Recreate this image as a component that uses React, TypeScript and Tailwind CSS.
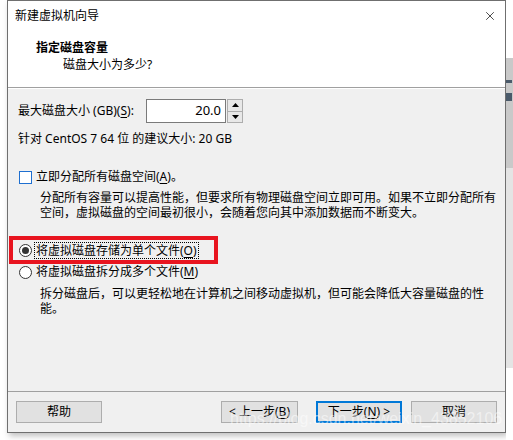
import { X } from 'lucide-react';

const font = { fontFamily: '"Noto Sans", "Noto Sans CJK SC", sans-serif' };

function Key({ k }: { k: string }) {
  return <span className="underline underline-offset-2">{k}</span>;
}

function Button({ children, focused }: { children: React.ReactNode; focused?: boolean }) {
  return (
    <div
      className={
        'w-[86px] h-[22px] flex items-center justify-center text-[12px] text-black bg-[#e1e1e1] ' +
        (focused ? 'border-2 border-[#0078d7]' : 'border border-[#adadad]')
      }
    >
      {children}
    </div>
  );
}

export default function App() {
  return (
    <div className="w-[513px] h-[440px] bg-white flex overflow-hidden relative" style={font}>
      <div className="w-[7px] shrink-0" />

      {/* dialog */}
      <div className="w-[499px] h-[433px] shrink-0 border border-[#6f6f6f] flex flex-col bg-[#f0f0f0] shadow-[2px_3px_6px_rgba(0,0,0,0.25)]">
        {/* header */}
        <div className="h-[87px] bg-white border-b border-[#a0a0a0] flex flex-col">
          <div className="h-[30px] flex items-center justify-between pl-[7px] pr-[8px]">
            <span className="text-[12px] text-black leading-none">新建虚拟机向导</span>
            <X className="w-[14px] h-[14px] text-black" strokeWidth={1.2} />
          </div>
          <div className="pl-[28px] pt-[10px] text-[12px] font-bold text-black leading-[14px]">指定磁盘容量</div>
          <div className="pl-[55px] pt-[3px] text-[12px] text-black leading-[14px]">磁盘大小为多少?</div>
        </div>
        <div className="h-px bg-white" />

        {/* body */}
        <div className="flex-1 flex flex-col pl-[10px] pr-[10px] text-[12px] text-black">
          <div className="flex items-center mt-[10px] h-[24px]">
            <span className="w-[128px]">
              最大磁盘大小 (GB)(<Key k="S" />):
            </span>
            <div className="w-[80px] h-[24px] bg-white border border-[#7a7a7a] flex items-center justify-end pr-[4px] text-[13px]">
              20.0
            </div>
            <div className="w-[16px] h-[24px] flex flex-col border border-[#adadad] ml-px">
              <div className="flex-1 flex items-center justify-center bg-[#e8e8e8] border-b border-[#adadad]">
                <svg width="7" height="4" viewBox="0 0 7 4"><path d="M3.5 0 L7 4 L0 4 Z" fill="#000" /></svg>
              </div>
              <div className="flex-1 flex items-center justify-center bg-[#e8e8e8]">
                <svg width="7" height="4" viewBox="0 0 7 4"><path d="M0 0 L7 0 L3.5 4 Z" fill="#000" /></svg>
              </div>
            </div>
          </div>
          <div className="mt-[8px] leading-[16px]">针对 CentOS 7 64 位 的建议大小: 20 GB</div>

          <div className="flex items-center mt-[22px] h-[16px]">
            <div className="w-[13px] h-[13px] bg-white border border-[#1e6fd0] ml-[1px] mr-[4px]" />
            <span>
              立即分配所有磁盘空间(<Key k="A" />)。
            </span>
          </div>
          <div className="pl-[22px] mt-[5px] leading-[15px] whitespace-nowrap">
            分配所有容量可以提高性能，但要求所有物理磁盘空间立即可用。如果不立即分配所有
            <br />
            空间，虚拟磁盘的空间最初很小，会随着您向其中添加数据而不断变大。
          </div>

          {/* highlighted option */}
          <div className="mt-[16px] ml-[-9px] w-[209px] h-[28px] border-[4px] border-[#e8141f] flex items-center pl-[6px]">
            <div className="w-[13px] h-[13px] rounded-full bg-white border border-[#333333] flex items-center justify-center mr-[3px]">
              <div className="w-[7px] h-[7px] rounded-full bg-[#333333]" />
            </div>
            <span className="outline-1 outline-dotted outline-black px-[1px] leading-[15px]">
              将虚拟磁盘存储为单个文件(<Key k="O" />)
            </span>
          </div>
          <div className="flex items-center mt-[-1px] h-[18px]">
            <div className="w-[13px] h-[13px] rounded-full bg-white border border-[#333333] ml-[1px] mr-[4px]" />
            <span>
              将虚拟磁盘拆分成多个文件(<Key k="M" />)
            </span>
          </div>
          <div className="pl-[22px] mt-[5px] leading-[15px] whitespace-nowrap">
            拆分磁盘后，可以更轻松地在计算机之间移动虚拟机，但可能会降低大容量磁盘的性
            <br />
            能。
          </div>
        </div>

        {/* footer */}
        <div className="h-[41px] border-t border-[#a0a0a0] flex items-center pl-[8px] pr-[8px]">
          <Button>帮助</Button>
          <div className="flex-1" />
          <div className="w-[77px] h-[22px] flex items-center justify-center text-[12px] bg-[#e1e1e1] border border-[#adadad] mr-[18px]">
            &lt; 上一步(<Key k="B" />)
          </div>
          <Button focused>
            下一步(<Key k="N" />) &gt;
          </Button>
          <div className="w-[9px]" />
          <Button>取消</Button>
        </div>
      </div>

      {/* what lies beside the dialog */}
      <div className="flex-1 flex flex-col">
        <div className="h-[58px] bg-white" />
        <div className="h-[110px] bg-[#c9c9c9] flex flex-col items-start pt-[22px] gap-[10px]">
          <div className="w-[6px] h-[3px] bg-[#4a5a6a]" />
          <div className="w-[6px] h-[8px] bg-[#4a5a6a]" />
        </div>
        <div className="h-[200px] bg-[#e4e4e4]" />
        <div className="flex-1 bg-white" />
      </div>

      {/* watermark */}
      <div
        className="absolute left-[230px] top-[410px] text-[16px] leading-[18px] text-white/50 whitespace-nowrap pointer-events-none"
        style={{ fontFamily: '"Liberation Sans", sans-serif' }}
      >
        https://blog.csdn.net/weixin_43852106
      </div>
    </div>
  );
}
